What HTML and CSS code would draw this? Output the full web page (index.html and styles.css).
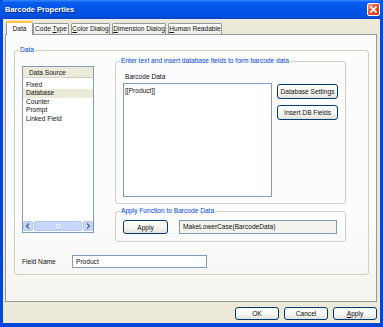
FILE: index.html
```html
<!DOCTYPE html>
<html lang="en">
<head>
    <meta charset="UTF-8">
    <title>Barcode Properties</title>
    <link rel="stylesheet" href="styles.css">
</head>
<body>
    <div class="window">
        <div class="titlebar">
            <span class="title">Barcode Properties</span>
            <span class="close">
                <svg width="11" height="11" viewBox="0 0 11 11">
                    <path d="M3 3 L8 8 M8 3 L3 8" stroke="#fff" stroke-width="1.7" stroke-linecap="square"/>
                </svg>
            </span>
        </div>
        <div class="frame">
            <div class="tabs">
                <span class="tab active">Data</span>
                <span class="tab w-code">Code <u>T</u>ype</span>
                <span class="tab w-color"><u>C</u>olor Dialog</span>
                <span class="tab w-dim"><u>D</u>imension Dialog</span>
                <span class="tab w-human"><u>H</u>uman Readable</span>
            </div>
            <div class="panel">
                <fieldset class="group data-group">
                    <legend>Data</legend>
                    <div class="data-top">
                        <div class="listbox">
                            <div class="list-head">Data Source</div>
                            <ul class="list-items">
                                <li>Fixed</li>
                                <li class="sel">Database</li>
                                <li>Counter</li>
                                <li>Prompt</li>
                                <li>Linked Field</li>
                            </ul>
                            <div class="hscroll">
                                <span class="sb-btn">
                                    <svg width="8" height="8" viewBox="0 0 8 8"><path d="M5 1.5 L2.5 4 L5 6.5" fill="none" stroke="#4d6185" stroke-width="1.3"/></svg>
                                </span>
                                <span class="sb-track"><span class="sb-thumb"><span class="grip"></span></span></span>
                                <span class="sb-btn">
                                    <svg width="8" height="8" viewBox="0 0 8 8"><path d="M3 1.5 L5.5 4 L3 6.5" fill="none" stroke="#4d6185" stroke-width="1.3"/></svg>
                                </span>
                            </div>
                        </div>
                        <div class="right-col">
                            <fieldset class="group enter-group">
                                <legend>Enter text and insert database fields to form barcode data</legend>
                                <div class="bd-label">Barcode Data</div>
                                <div class="bd-row">
                                    <div class="textarea">[[Product]]</div>
                                    <div class="side-buttons">
                                        <button class="btn side-btn">Database Settings</button>
                                        <button class="btn side-btn second">Insert DB Fields</button>
                                    </div>
                                </div>
                            </fieldset>
                            <fieldset class="group func-group">
                                <legend>Apply Function to Barcode Data</legend>
                                <div class="func-row">
                                    <button class="btn apply-fn">Apply</button>
                                    <div class="func-box">MakeLowerCase(BarcodeData)</div>
                                </div>
                            </fieldset>
                        </div>
                    </div>
                    <div class="field-row">
                        <span class="field-label">Field Name</span>
                        <div class="input">Product</div>
                    </div>
                </fieldset>
            </div>
            <div class="footer">
                <button class="btn foot-btn">OK</button>
                <button class="btn foot-btn">Cancel</button>
                <button class="btn foot-btn"><u>A</u>pply</button>
            </div>
        </div>
    </div>
</body>
</html>
```

FILE: styles.css
```css
* {
    box-sizing: border-box;
}

body {
    margin: 0;
    font-family: "Liberation Sans", Arial, sans-serif;
    font-size: 6.6px;
    color: #111;
}

.window {
    width: 383px;
    height: 327px;
    background: #0046d8;
    display: flex;
    flex-direction: column;
}

.titlebar {
    height: 19px;
    display: flex;
    align-items: center;
    justify-content: space-between;
    padding: 0 3px 1px 5px;
    background: linear-gradient(#3a8cff 0%, #0a5ff0 12%, #0054e6 45%, #0050e0 80%, #0048cc 100%);
    border-radius: 5px 5px 0 0;
}

.title {
    color: #fff;
    font-weight: bold;
    font-size: 7.5px;
    text-shadow: 1px 1px 0 #0a2a80;
}

.close {
    width: 13px;
    height: 13px;
    border: 1px solid #fff;
    border-radius: 2px;
    background: linear-gradient(135deg, #f6a48a, #e5512c 45%, #cf3f1c);
    display: flex;
    align-items: center;
    justify-content: center;
}

.frame {
    flex: 1;
    margin: 0 3px 4px 3px;
    background: #ece9d8;
    display: flex;
    flex-direction: column;
}

.tabs {
    display: flex;
    align-items: flex-end;
    height: 15px;
    padding-left: 3px;
}

.tab {
    height: 11px;
    margin-right: 2px;
    border: 1px solid #919b9c;
    border-bottom: none;
    border-radius: 2px 2px 0 0;
    background: linear-gradient(#fff, #ecebe6);
    line-height: 10px;
    text-align: center;
    white-space: nowrap;
}

.w-code {
    width: 36px;
}

.w-color {
    width: 39px;
}

.w-dim {
    width: 54px;
}

.w-human {
    width: 54px;
}

.tab.active {
    width: 27px;
    height: 14px;
    margin-right: 0;
    border-top: 2px solid #ffc83c;
    background: #fcfcfe;
    line-height: 12px;
    position: relative;
    top: 1px;
    z-index: 1;
}

.tab u {
    text-decoration: underline;
}

.panel {
    margin-left: 2px;
    width: 372px;
    height: 268px;
    border: 1px solid #919b9c;
    background: linear-gradient(#fcfcfe 70%, #f4f3ee);
    padding: 11px 0 0 8px;
}

.group {
    margin: 0;
    border: 1px solid #d0d0bf;
    border-radius: 3px;
    padding: 0;
}

.group legend {
    color: #0046d5;
    padding: 0 1px;
    margin-left: -3px;
    line-height: 8px;
    font-size: 6.6px;
}

.data-group {
    width: 355px;
    padding: 3px 0 6px 7px;
}

.data-top {
    display: flex;
    gap: 21px;
}

.listbox {
    width: 72px;
    height: 167px;
    margin-top: 9px;
    border: 1px solid #7f9db9;
    background: #fff;
    display: flex;
    flex-direction: column;
}

.list-head {
    height: 11px;
    margin: 0 0 3px 0;
    background: #ebeadb;
    border-bottom: 1px solid #d6d2c2;
    padding-left: 6px;
    line-height: 11px;
}

.list-items {
    list-style: none;
    margin: 0;
    padding: 0;
    flex: 1;
}

.list-items li {
    height: 8.4px;
    line-height: 8.4px;
    padding-left: 3px;
}

.list-items li.sel {
    background: #ecead9;
}

.hscroll {
    height: 10px;
    margin: 0 0 1px 0;
    display: flex;
    background: #f6f6f2;
}

.sb-btn {
    width: 10px;
    background: #c8d7fb;
    border: 1px solid #b4c7f0;
    border-radius: 2px;
    display: flex;
    align-items: center;
    justify-content: center;
}

.sb-track {
    flex: 1;
    padding: 0 1px;
    display: flex;
}

.sb-thumb {
    flex: 1;
    background: #c8d7fb;
    border: 1px solid #b4c7f0;
    border-radius: 2px;
    display: flex;
    justify-content: center;
    align-items: center;
}

.grip {
    width: 5px;
    height: 4px;
    border: 1px solid #e6eeff;
}

.right-col {
    width: 231px;
    display: flex;
    flex-direction: column;
    gap: 3px;
}

.enter-group {
    padding: 7px 0 6px 7px;
}

.bd-label {
    margin-left: 2px;
    height: 10px;
    line-height: 10px;
    margin-bottom: 1px;
}

.bd-row {
    display: flex;
    gap: 5px;
}

.textarea {
    width: 149px;
    height: 114px;
    border: 1px solid #7f9db9;
    background: #fff;
    padding: 2px 1px;
    line-height: 9px;
}

.side-buttons {
    display: flex;
    flex-direction: column;
    padding-top: 1px;
}

.btn {
    font-family: "Liberation Sans", Arial, sans-serif;
    font-size: 6.6px;
    color: #111;
    border: 1px solid #003c74;
    border-radius: 3px;
    background: linear-gradient(#fff, #f4f4f0 60%, #e3e2da);
    padding: 0;
}

.side-btn {
    width: 61px;
    height: 15px;
}

.side-btn.second {
    margin-top: 6px;
}

.func-group {
    padding: 5px 0 7px 7px;
}

.func-row {
    display: flex;
    gap: 11px;
}

.apply-fn {
    width: 45px;
    height: 14px;
}

.func-box {
    width: 158px;
    height: 14px;
    border: 1px solid #7f9db9;
    background: #f3f2ec;
    padding-left: 3px;
    line-height: 12px;
}

.field-row {
    display: flex;
    align-items: center;
    margin-top: 13px;
}

.field-label {
    width: 50px;
}

.input {
    width: 135px;
    height: 13px;
    border: 1px solid #7f9db9;
    background: #fff;
    padding-left: 3px;
    line-height: 11px;
}

.footer {
    display: flex;
    justify-content: flex-end;
    gap: 5px;
    padding: 5px 3px 0 0;
}

.foot-btn {
    width: 44px;
    height: 13px;
}
```
